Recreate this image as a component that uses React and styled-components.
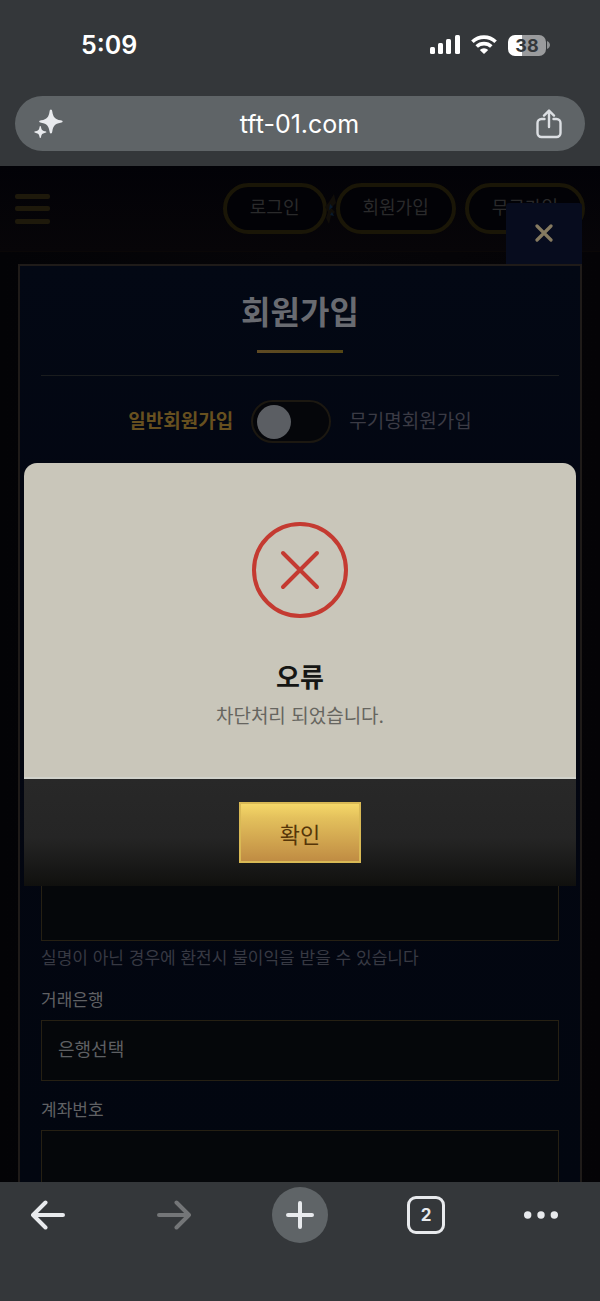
import React, { useState } from 'react'
import styled, { createGlobalStyle, css } from 'styled-components'

const GlobalStyle = createGlobalStyle`
  * {
    box-sizing: border-box;
  }

  body {
    margin: 0;
    background: #34373a;
  }

  button, input, select {
    margin: 0;
    font-family: inherit;
  }
`

const hiddenFields = ['아이디', '비밀번호', '휴대폰번호']

const StatusIcons = () => (
  <StatusIconRow>
    <svg width='30' height='20' viewBox='0 0 30 20' fill='#fff'>
      <rect x='0' y='12' width='5' height='7' rx='1.5' />
      <rect x='8' y='8' width='5' height='11' rx='1.5' />
      <rect x='16' y='4' width='5' height='15' rx='1.5' />
      <rect x='25' y='0' width='5' height='19' rx='1.5' />
    </svg>
    <svg width='26' height='20' viewBox='0 0 26 20' fill='none' stroke='#fff' strokeWidth='3.6'>
      <path d='M1.4 6.8 A16.8 16.8 0 0 1 24.6 6.8' />
      <path d='M5.7 11.5 A10.6 10.6 0 0 1 20.3 11.5' />
      <path d='M13 19 L8.8 14.9 A6 6 0 0 1 17.2 14.9 Z' fill='#fff' stroke='none' />
    </svg>
    <BatteryRow>
      <Battery>38</Battery>
      <svg width='3' height='8' viewBox='0 0 3 8' fill='#8f9193'>
        <path d='M0 0 C4 2 4 6 0 8 Z' />
      </svg>
    </BatteryRow>
  </StatusIconRow>
)

const SparkleIcon = () => (
  <svg width='29' height='30' viewBox='0 0 30 30' fill='#e8eaed'>
    <path d='M17.5 0 C18.4 0 18.7 .8 18.9 2 C19.8 7.6 21.4 10.2 27.5 11.2 C29 11.4 29.6 11.7 29.6 12.4 C29.6 13.1 29 13.4 27.5 13.6 C21.4 14.6 19.8 17.2 18.9 22.8 C18.7 24 18.4 24.8 17.5 24.8 C16.6 24.8 16.3 24 16.1 22.8 C15.2 17.2 13.6 14.6 7.5 13.6 C6 13.4 5.4 13.1 5.4 12.4 C5.4 11.7 6 11.4 7.5 11.2 C13.6 10.2 15.2 7.6 16.1 2 C16.3 .8 16.6 0 17.5 0 Z' />
    <path d='M6.5 17 C7.2 17 7.2 18 7.4 19 C7.9 21.4 8.6 22 11 22.4 C12 22.6 12.8 22.6 12.8 23.3 C12.8 24 12 24 11 24.2 C8.6 24.6 7.9 25.4 7.4 27.8 C7.2 28.8 7.2 29.6 6.5 29.6 C5.8 29.6 5.8 28.8 5.6 27.8 C5.1 25.4 4.4 24.6 2 24.2 C1 24 .2 24 .2 23.3 C.2 22.6 1 22.6 2 22.4 C4.4 22 5.1 21.4 5.6 19 C5.8 18 5.8 17 6.5 17 Z' />
  </svg>
)

const ShareIcon = () => (
  <svg width='26' height='30' viewBox='0 0 26 30' fill='none' stroke='#dcdfe3' strokeWidth='2.4' strokeLinecap='round' strokeLinejoin='round'>
    <path d='M8.5 10 H5.5 A4 4 0 0 0 1.5 14 V24 A4 4 0 0 0 5.5 28 H20.5 A4 4 0 0 0 24.5 24 V14 A4 4 0 0 0 20.5 10 H17.5' />
    <path d='M13 18 V2 M8 6.6 L13 1.6 L18 6.6' />
  </svg>
)

const ArrowIcon = ({ forward }) => (
  <svg width='34' height='30' viewBox='0 0 34 30' fill='none' stroke={forward ? '#747678' : '#e8eaed'} strokeWidth='4' strokeLinecap='round' strokeLinejoin='round'>
    {forward
      ? <path d='M2 15 H32 M19.5 2.5 L32 15 L19.5 27.5' />
      : <path d='M32 15 H2 M14.5 2.5 L2 15 L14.5 27.5' />}
  </svg>
)

const PlusIcon = () => (
  <svg width='28' height='28' viewBox='0 0 28 28' stroke='#e8eaed' strokeWidth='4' strokeLinecap='round'>
    <path d='M14 2 V26 M2 14 H26' />
  </svg>
)

const DotsIcon = () => (
  <svg width='34' height='8' viewBox='0 0 34 8' fill='#e8eaed'>
    <circle cx='3.7' cy='4' r='3.7' />
    <circle cx='17' cy='4' r='3.7' />
    <circle cx='30.3' cy='4' r='3.7' />
  </svg>
)

const MenuIcon = () => (
  <svg width='35' height='30' viewBox='0 0 35 30' fill='#1e190b'>
    <rect width='35' height='5' rx='2' />
    <rect y='12' width='35' height='5' rx='2' />
    <rect y='25' width='35' height='5' rx='2' />
  </svg>
)

const CloseIcon = () => (
  <svg width='18' height='18' viewBox='0 0 18 18' stroke='#857a60' strokeWidth='3.2' strokeLinecap='round'>
    <path d='M2 2 L16 16 M16 2 L2 16' />
  </svg>
)

/* small crest that shows between the header buttons */
const CrestIcon = () => (
  <svg width='9' height='30' viewBox='0 0 9 30' overflow='visible'>
    <path d='M7 0 L9 9 L4 14 L8 18 L4 22 L2 30 L-1 24 L1 18 L-2 13 L2 8 Z' fill='#110e09' />
    <path d='M3 10 L6 13 L2 16 Z M5 18 L7 22 L3 21 Z' fill='#091a2c' />
  </svg>
)

const ErrorIcon = () => (
  <svg width='96' height='96' viewBox='0 0 96 96' fill='none' stroke='#c43a31' strokeWidth='4' strokeLinecap='round'>
    <circle cx='48' cy='48' r='46' />
    <path d='M31 31 L65 65 M65 31 L31 65' />
  </svg>
)

const SignupForm = () => {
  const [anonymous, setAnonymous] = useState(false)

  return (
    <Panel>
      <CloseTab type='button' aria-label='닫기'><CloseIcon /></CloseTab>
      <Title>회원가입</Title>
      <Toggle>
        <ToggleLabel htmlFor='signup-kind' $active={!anonymous}>일반회원가입</ToggleLabel>
        <Switch
          id='signup-kind'
          type='checkbox'
          checked={anonymous}
          onChange={(e) => setAnonymous(e.target.checked)}
        />
        <ToggleLabel htmlFor='signup-kind' $active={anonymous}>무기명회원가입</ToggleLabel>
      </Toggle>
      <Fields>
        {hiddenFields.map((name) => (
          <Field key={name}>
            <Input aria-label={name} />
          </Field>
        ))}
        <Field>
          <Input aria-label='예금주' aria-describedby='holder-help' />
          <Help id='holder-help'>실명이 아닌 경우에 환전시 불이익을 받을 수 있습니다</Help>
        </Field>
        <Field>
          <Label htmlFor='bank'>거래은행</Label>
          <Select id='bank' defaultValue=''>
            <option value=''>은행선택</option>
          </Select>
        </Field>
        <Field>
          <Label htmlFor='account'>계좌번호</Label>
          <Input id='account' />
        </Field>
      </Fields>
    </Panel>
  )
}

const App = () => {
  return (
    <Screen>
      <GlobalStyle />
      <StatusBar>
        <Time>5:09</Time>
        <StatusIcons />
      </StatusBar>
      <AddressArea>
        <AddressBar>
          <IconButton type='button' aria-label='AI'><SparkleIcon /></IconButton>
          <Address>tft-01.com</Address>
          <IconButton type='button' aria-label='공유'><ShareIcon /></IconButton>
        </AddressBar>
      </AddressArea>
      <Page>
        <SiteHeader>
          <IconButton type='button' aria-label='메뉴'><MenuIcon /></IconButton>
          <Pills>
            <Pill type='button'>로그인</Pill>
            <CrestIcon />
            <Pill type='button'>회원가입</Pill>
            <PillGap />
            <Pill type='button'>무료가입</Pill>
          </Pills>
        </SiteHeader>
        <SignupForm />
        <Overlay>
          <Modal role='alertdialog' aria-labelledby='modal-title' aria-describedby='modal-text'>
            <ModalBody>
              <ErrorIcon />
              <ModalTitle id='modal-title'>오류</ModalTitle>
              <ModalText id='modal-text'>차단처리 되었습니다.</ModalText>
            </ModalBody>
            <ModalFooter>
              <ConfirmButton type='button'>확인</ConfirmButton>
            </ModalFooter>
          </Modal>
        </Overlay>
      </Page>
      <BottomBar>
        <NavButton type='button' aria-label='뒤로'><ArrowIcon /></NavButton>
        <NavButton type='button' aria-label='앞으로' disabled><ArrowIcon forward /></NavButton>
        <NewTabButton type='button' aria-label='새 탭'><PlusIcon /></NewTabButton>
        <NavButton type='button'><TabCount>2</TabCount></NavButton>
        <MoreButton type='button' aria-label='더보기'><DotsIcon /></MoreButton>
      </BottomBar>
    </Screen>
  )
}

const Screen = styled.div`
  display: flex;
  flex-direction: column;
  height: 100vh;
  font-family: Inter, "Noto Sans CJK KR", sans-serif;
  background: #34373a;
`

const StatusBar = styled.div`
  display: flex;
  justify-content: space-between;
  align-items: center;
  flex: none;
  height: 96px;
  padding: 0 50px 6px 81px;
`

const Time = styled.span`
  font-size: 25px;
  font-weight: 600;
  line-height: 32px;
  color: #fff;
`

const StatusIconRow = styled.div`
  display: flex;
  align-items: center;
  gap: 11px;
`

const BatteryRow = styled.div`
  display: flex;
  align-items: center;
  gap: 1px;
`

const Battery = styled.span`
  width: 38px;
  border-radius: 7px;
  font-size: 18px;
  font-weight: 700;
  line-height: 21px;
  text-align: center;
  color: #34373a;
  background: linear-gradient(90deg, #fff 38%, #9a9b9d 38%);
`

const AddressArea = styled.div`
  flex: none;
  padding: 0 15px 15px;
`

const AddressBar = styled.div`
  display: flex;
  align-items: center;
  justify-content: space-between;
  height: 55px;
  padding: 0 23px 0 19px;
  border-radius: 28px;
  background: #5f6467;
`

const Address = styled.span`
  font-size: 25px;
  line-height: 32px;
  color: #fff;
`

const IconButton = styled.button`
  display: flex;
  align-items: center;
  justify-content: center;
  padding: 0;
  border: 0;
  background: none;
`

const Page = styled.main`
  position: relative;
  flex: 1;
  min-height: 0;
  overflow: hidden;
  background: linear-gradient(90deg, #030306, #060508 50%, #040306);
`

const SiteHeader = styled.header`
  display: flex;
  align-items: center;
  justify-content: space-between;
  height: 86px;
  padding: 0 15px;
  border-bottom: 1px solid #0a0707;
  background: linear-gradient(#020207, #070508);
`

const Pills = styled.div`
  display: flex;
  align-items: center;
`

const Pill = styled.button`
  height: 51px;
  padding: 0 23px 1px;
  border: 4px solid #1a1607;
  border-radius: 26px;
  font-size: 18px;
  line-height: 26px;
  color: #2a2a2b;
  background: #020206;
`

const PillGap = styled.span`
  width: 9px;
`

const Panel = styled.form`
  position: relative;
  margin: 12px 18px 0;
  padding: 0 21px;
  border: 2px solid #1f1b19;
  background: linear-gradient(#030814, #030611 40%, #020610);
`

/* sticks out above the panel's right corner */
const CloseTab = styled.button`
  position: absolute;
  right: -2px;
  bottom: 100%;
  display: flex;
  align-items: center;
  justify-content: center;
  width: 76px;
  height: 61px;
  margin-bottom: 2px;
  padding: 0 0 2px;
  border: 0;
  border-radius: 3px 3px 0 0;
  background: #070c1e;
`

const Title = styled.h1`
  display: flex;
  flex-direction: column;
  align-items: center;
  gap: 14px;
  margin: 0;
  padding: 24px 0 22px;
  border-bottom: 1px solid #1a1c1e;
  font-size: 32px;
  font-weight: 700;
  line-height: 46px;
  color: #696b71;

  &::after {
    content: '';
    width: 86px;
    height: 3px;
    background: linear-gradient(90deg, #5f4a24, #544614);
  }
`

const Toggle = styled.div`
  display: flex;
  align-items: center;
  justify-content: center;
  gap: 18px;
  padding: 24px 0 58px;
`

const ToggleLabel = styled.label`
  font-size: 19px;
  line-height: 28px;
  color: #3b3b45;

  ${({ $active }) => $active && css`
    font-weight: 700;
    color: #67501f;
  `}
`

const Switch = styled.input`
  appearance: none;
  display: flex;
  align-items: center;
  width: 80px;
  height: 43px;
  margin: 0;
  padding: 0 4px;
  border: 2px solid #1c1811;
  border-radius: 22px;
  background: #05060a;

  &::before {
    content: '';
    width: 34px;
    height: 34px;
    border-radius: 50%;
    background: #5b5e63;
  }

  &:checked {
    justify-content: flex-end;
  }
`

const Fields = styled.div`
  display: flex;
  flex-direction: column;
`

const Field = styled.div`
  display: flex;
  flex-direction: column;
  padding-top: 49px;
`

const Label = styled.label`
  margin-top: -33px;
  padding-bottom: 7px;
  font-size: 17px;
  line-height: 26px;
  color: #606164;
`

const control = css`
  width: 100%;
  height: 61px;
  padding: 0 16px;
  border: 1px solid #262013;
  border-radius: 0;
  font-size: 18px;
  color: #5f6063;
  background: #05070a;
`

const Input = styled.input`
  ${control}
`

const Select = styled.select`
  ${control}
  appearance: none;
  padding-bottom: 3px;
`

const Help = styled.p`
  margin: 0;
  padding-top: 4px;
  font-size: 17px;
  line-height: 26px;
  color: #373943;
`

const Overlay = styled.div`
  position: absolute;
  inset: 0;
  display: flex;
  align-items: center;
  padding: 1px 24px 0;
`

const Modal = styled.section`
  width: 100%;
  overflow: hidden;
  border-radius: 13px 13px 0 0;
`

const ModalBody = styled.div`
  display: flex;
  flex-direction: column;
  align-items: center;
  padding: 59px 20px 45px;
  border-bottom: 2px solid #d1d2cb;
  background: #c9c6ba;
`

const ModalTitle = styled.h2`
  margin: 40px 0 0;
  font-size: 26px;
  font-weight: 700;
  line-height: 40px;
  color: #151614;
`

const ModalText = styled.p`
  margin: 4px 0 0;
  font-size: 19px;
  line-height: 30px;
  color: #66655f;
`

const ModalFooter = styled.div`
  display: flex;
  justify-content: center;
  padding: 23px 0;
  background: linear-gradient(#282828 0%, #252525 55%, #10100e 100%);
`

const ConfirmButton = styled.button`
  width: 122px;
  height: 61px;
  padding: 0;
  border: 2px solid #d9b955;
  font-size: 22px;
  color: #553508;
  background: linear-gradient(#f5d768, #e3c05c 25%, #c08c43);
`

const BottomBar = styled.nav`
  display: flex;
  align-items: flex-start;
  justify-content: space-between;
  flex: none;
  height: 119px;
  padding: 5px 42px 0 20px;
`

const NavButton = styled(IconButton)`
  width: 56px;
  height: 56px;
`

const NewTabButton = styled(NavButton)`
  border-radius: 50%;
  background: #5f6467;
`

const MoreButton = styled(IconButton)`
  height: 56px;
`

const TabCount = styled.span`
  width: 38px;
  height: 38px;
  border: 3px solid #e8eaed;
  border-radius: 9px;
  font-size: 17px;
  font-weight: 700;
  line-height: 32px;
  text-align: center;
  color: #e8eaed;
`

export default App
